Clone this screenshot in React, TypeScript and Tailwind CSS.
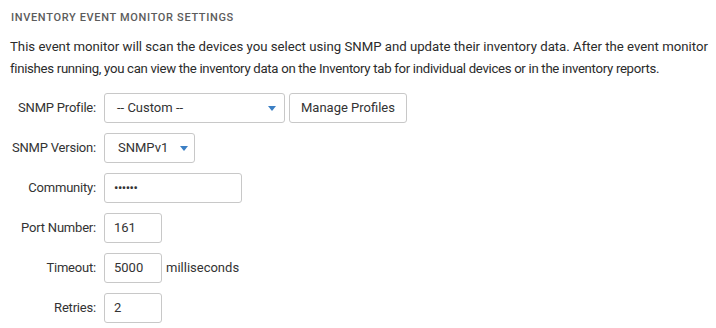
import React from "react";

const font = { fontFamily: 'Roboto, "Liberation Sans", sans-serif' };

function Arrow() {
  return (
    <svg width="8" height="5" viewBox="0 0 8 5" className="shrink-0">
      <path d="M0 0 L8 0 L4 5 Z" fill="#3b7fc4" />
    </svg>
  );
}

function Row({ label, children }: { label: string; children: React.ReactNode }) {
  return (
    <div className="flex items-center h-[30px]">
      <div className="w-[97px] pr-[1px] text-right text-[13px] tracking-[-0.2px] text-[#333]">{label}</div>
      <div className="ml-[7px] flex items-center">{children}</div>
    </div>
  );
}

export default function App() {
  return (
    <div className="w-[716px] h-[328px] bg-white text-[#333]" style={font}>
      <div className="pl-[11px] pt-[11px] text-[11px] font-medium tracking-[0.06em] text-[#5c5c5c] leading-[14px]">
        INVENTORY EVENT MONITOR SETTINGS
      </div>
      <p className="mt-[11px] pl-[10px] text-[13.2px] leading-[22px] text-[#2b2b2b] whitespace-nowrap">
        This event monitor will scan the devices you select using SNMP and update their inventory data. After the event monitor
        <br />
        <span className="tracking-[-0.3px]">
          finishes running, you can view the inventory data on the Inventory tab for individual devices or in the inventory reports.
        </span>
      </p>
      <div className="mt-[13px] flex flex-col gap-[10px]">
        <Row label="SNMP Profile:">
          <div className="w-[181px] h-[30px] border border-[#c8c8c8] rounded-[3px] flex items-center justify-between pl-[12px] pr-[8px] text-[13px]">
            <span>-- Custom --</span>
            <Arrow />
          </div>
          <button className="ml-[4px] w-[118px] h-[30px] border border-[#c8c8c8] rounded-[3px] bg-white text-[13px] text-[#333]">
            Manage Profiles
          </button>
        </Row>
        <Row label="SNMP Version:">
          <div className="w-[91px] h-[30px] border border-[#c8c8c8] rounded-[3px] flex items-center justify-between pl-[13px] pr-[6px] text-[13px]">
            <span>SNMPv1</span>
            <Arrow />
          </div>
        </Row>
        <Row label="Community:">
          <div className="w-[138px] h-[30px] border border-[#c8c8c8] rounded-[3px] flex items-center pl-[9px] text-[13px] tracking-[-0.5px]">
            ••••••
          </div>
        </Row>
        <Row label="Port Number:">
          <div className="w-[58px] h-[30px] border border-[#c8c8c8] rounded-[3px] flex items-center pl-[9px] text-[13px]">161</div>
        </Row>
        <Row label="Timeout:">
          <div className="w-[58px] h-[30px] border border-[#c8c8c8] rounded-[3px] flex items-center pl-[9px] text-[13px]">5000</div>
          <span className="ml-[4px] text-[13px]">milliseconds</span>
        </Row>
        <Row label="Retries:">
          <div className="w-[58px] h-[30px] border border-[#c8c8c8] rounded-[3px] flex items-center pl-[9px] text-[13px]">2</div>
        </Row>
      </div>
    </div>
  );
}
